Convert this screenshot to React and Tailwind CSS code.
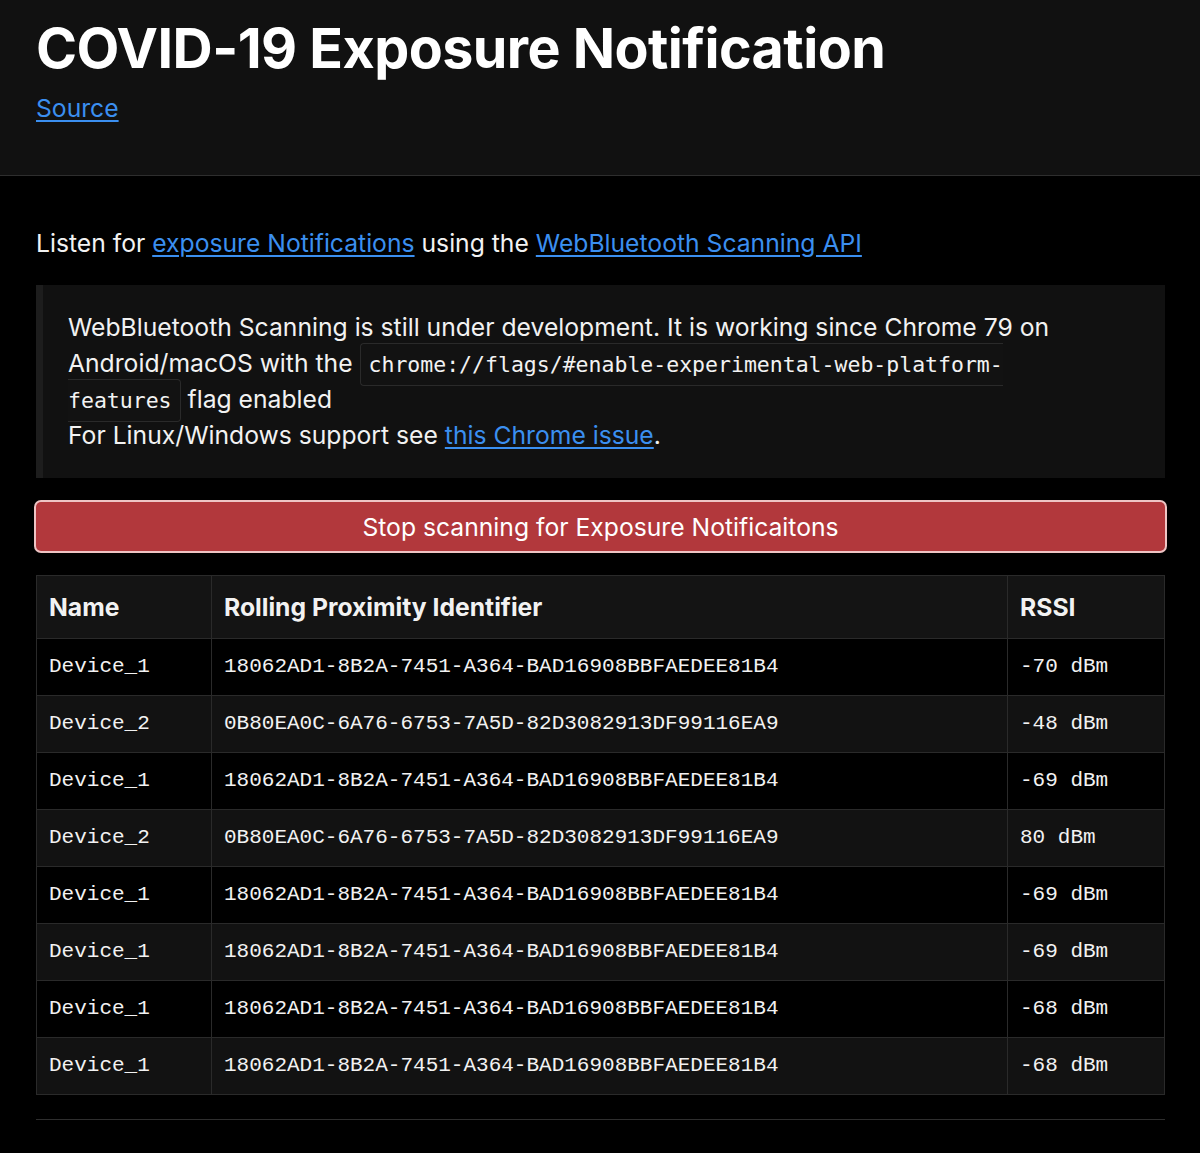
import React from "react";

const rows = [
  ["Device_1", "18062AD1-8B2A-7451-A364-BAD16908BBFAEDEE81B4", "-70 dBm"],
  ["Device_2", "0B80EA0C-6A76-6753-7A5D-82D3082913DF99116EA9", "-48 dBm"],
  ["Device_1", "18062AD1-8B2A-7451-A364-BAD16908BBFAEDEE81B4", "-69 dBm"],
  ["Device_2", "0B80EA0C-6A76-6753-7A5D-82D3082913DF99116EA9", "80 dBm"],
  ["Device_1", "18062AD1-8B2A-7451-A364-BAD16908BBFAEDEE81B4", "-69 dBm"],
  ["Device_1", "18062AD1-8B2A-7451-A364-BAD16908BBFAEDEE81B4", "-69 dBm"],
  ["Device_1", "18062AD1-8B2A-7451-A364-BAD16908BBFAEDEE81B4", "-68 dBm"],
  ["Device_1", "18062AD1-8B2A-7451-A364-BAD16908BBFAEDEE81B4", "-68 dBm"],
];

export default function App() {
  return (
    <div
      className="min-h-[1153px] bg-black text-[#f2f2f2] text-[24.7px] leading-[36px]"
      style={{ fontFamily: "Inter, 'Noto Sans', sans-serif" }}
    >
      <header className="bg-[#111111] border-b border-[#2e2e2e] px-[36px] pt-[15px] pb-[49px]">
        <h1 className="text-[55.6px] leading-[66px] font-bold tracking-[-0.01em] text-white">
          COVID-19 Exposure Notification
        </h1>
        <a href="#" className="block mt-[9px] w-fit text-[#3b8ff0] underline underline-offset-[3px]">
          Source
        </a>
      </header>

      <main className="px-[36px] pr-[35px] pt-[49px]">
        <p>
          Listen for{" "}
          <a href="#" className="text-[#3b8ff0] underline underline-offset-[3px]">
            exposure Notifications
          </a>{" "}
          using the{" "}
          <a href="#" className="text-[#3b8ff0] underline underline-offset-[3px]">
            WebBluetooth Scanning API
          </a>
        </p>

        <blockquote className="mt-[24px] bg-[#111111] border-l-[7px] border-[#1d1d1d] pl-[25px] pr-[90px] pt-[24px] pb-[25px]">
          WebBluetooth Scanning is still under development. It is working since Chrome 79 on Android/macOS with the{" "}
          <code
            className="bg-[#121212] border border-[#2a2a2a] rounded-[4px] px-[8px] py-[8px] text-[21.5px] leading-[20px] text-[#f2f2f2] [box-decoration-break:slice]"
            style={{ fontFamily: "'DejaVu Sans Mono', monospace" }}
          >
            chrome://flags/#enable-experimental-web-platform-features
          </code>{" "}
          flag enabled
          <br />
          For Linux/Windows support see{" "}
          <a href="#" className="text-[#3b8ff0] underline underline-offset-[3px]">
            this Chrome issue
          </a>
          .
        </blockquote>

        <button className="mt-[24px] w-full h-[49px] bg-[#b2383c] text-white rounded-[5px] ring-2 ring-[#eec4c4] text-[24.7px] leading-[36px]">
          Stop scanning for Exposure Notificaitons
        </button>

        <table className="mt-[24px] w-full border-collapse border border-[#2a2a2a]">
          <thead>
            <tr className="bg-[#141414] h-[63px]">
              <th className="w-[175px] border border-[#2a2a2a] text-left font-bold px-[12px]">Name</th>
              <th className="border border-[#2a2a2a] text-left font-bold px-[12px]">Rolling Proximity Identifier</th>
              <th className="w-[157px] border border-[#2a2a2a] text-left font-bold px-[12px]">RSSI</th>
            </tr>
          </thead>
          <tbody style={{ fontFamily: "'Liberation Mono', 'Courier New', monospace" }}>
            {rows.map((r, i) => (
              <tr key={i} className={`h-[57px] text-[21px] ${i % 2 === 0 ? "bg-black" : "bg-[#121212]"}`}>
                <td className="border border-[#2a2a2a] px-[12px]">{r[0]}</td>
                <td className="border border-[#2a2a2a] px-[12px]">{r[1]}</td>
                <td className="border border-[#2a2a2a] px-[12px]">{r[2]}</td>
              </tr>
            ))}
          </tbody>
        </table>

        <hr className="mt-[24px] border-0 border-t border-[#2e2e2e]" />
      </main>
    </div>
  );
}
